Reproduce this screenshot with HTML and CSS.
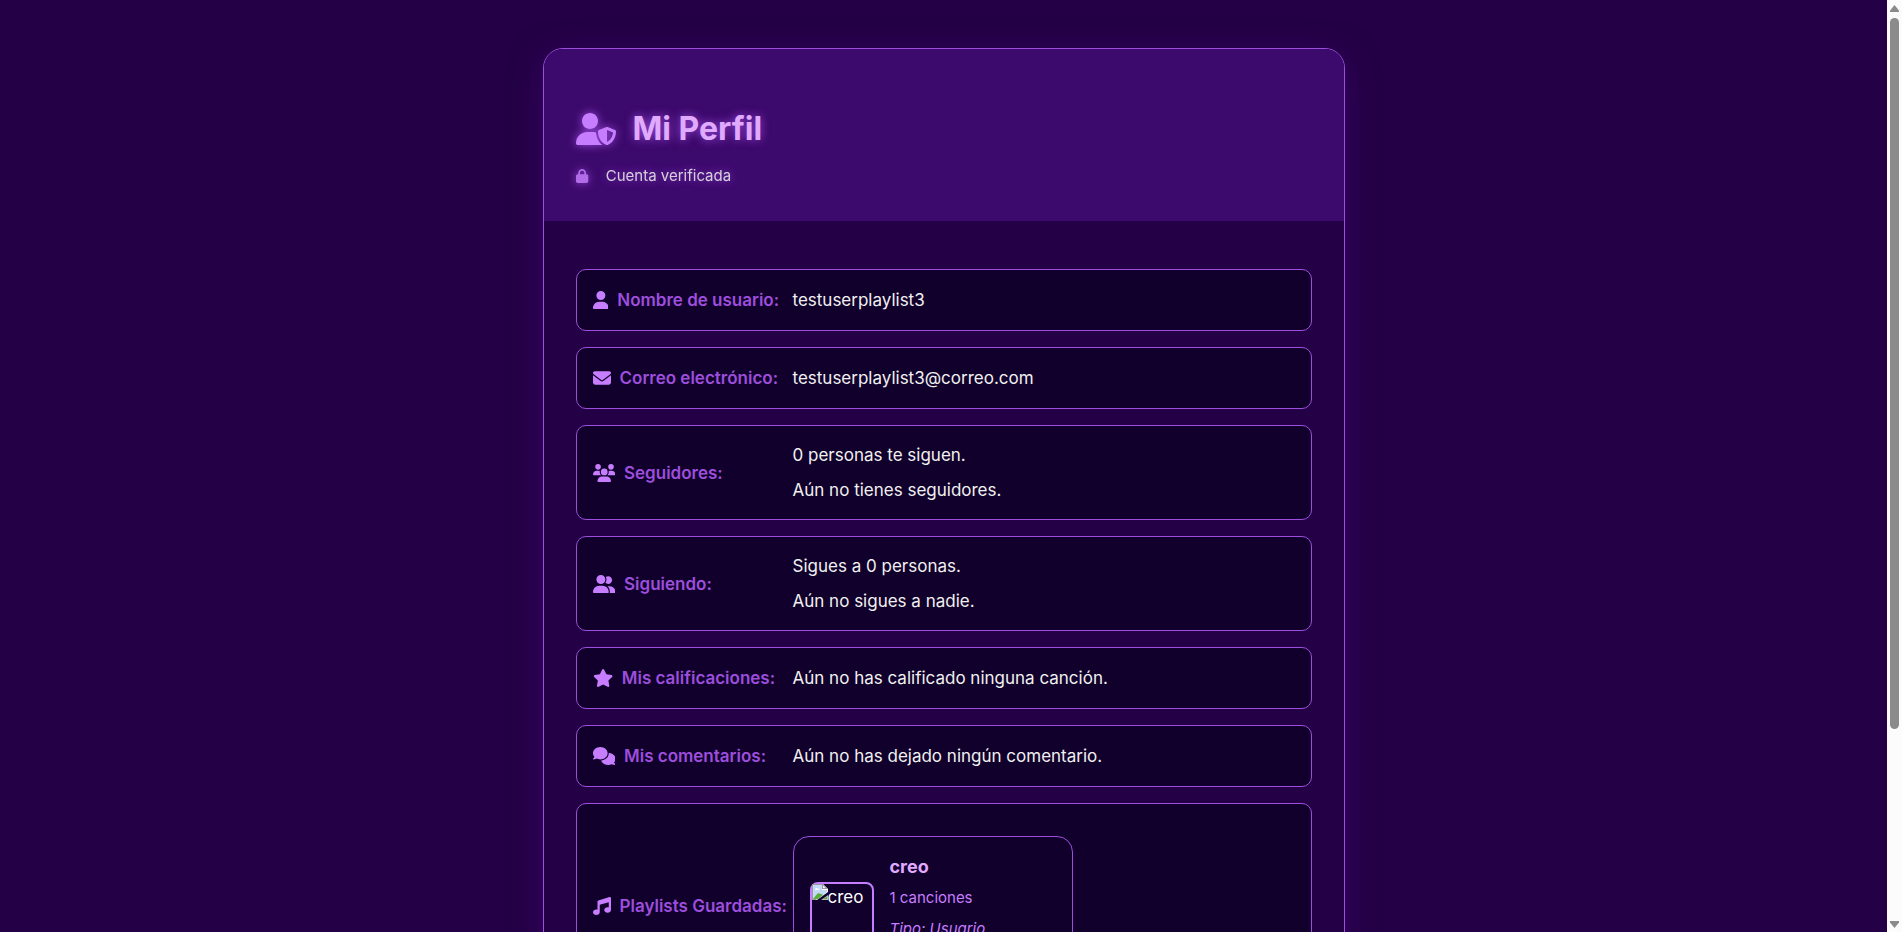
FILE: index.html
```html
<!DOCTYPE html>
<html lang="es">
<head>
<meta charset="utf-8">
<title>Mi Perfil</title>
<link rel="stylesheet" href="styles.css">
</head>
<body>
<div class="viewport">
<main class="page">
  <article class="profile">
    <header class="profile-header">
      <h1 class="title">
        <svg class="title-icon" viewBox="0 0 640 512" aria-hidden="true"><path d="M224 256c70.7 0 128-57.3 128-128S294.7 0 224 0S96 57.3 96 128s57.3 128 128 128zm-45.7 48C79.8 304 0 383.8 0 482.3C0 498.7 13.3 512 29.7 512H418.3c1.8 0 3.5-.2 5.3-.5c-76.3-55.1-99.8-141-103.1-200.2c-16.1-4.8-33.1-7.3-50.7-7.3H178.3zm308.8-78.3l-120 48C358 277.4 352 286.2 352 296c0 63.3 25.9 168.8 134.8 214.2c5.9 2.5 12.6 2.5 18.5 0C614.1 464.8 640 359.3 640 296c0-9.8-6-18.6-15.1-22.3l-120-48c-5.7-2.3-12.1-2.3-17.8 0zM591.4 312c-3.9 50.7-27.2 116.7-95.4 149.7V273.8L591.4 312z"/></svg>
        Mi Perfil
      </h1>
      <p class="verified">
        <svg class="verified-icon" viewBox="0 0 448 512" aria-hidden="true"><path d="M144 144v48H304V144c0-44.2-35.8-80-80-80s-80 35.8-80 80zM80 192V144C80 64.5 144.5 0 224 0s144 64.5 144 144v48h16c35.3 0 64 28.7 64 64V448c0 35.3-28.7 64-64 64H64c-35.3 0-64-28.7-64-64V256c0-35.3 28.7-64 64-64H80z"/></svg>
        Cuenta verificada
      </p>
    </header>
    <dl class="details">
      <div class="row">
        <dt class="label"><svg class="icon" viewBox="0 0 448 512" aria-hidden="true"><path d="M224 256A128 128 0 1 0 224 0a128 128 0 1 0 0 256zm-45.7 48C79.8 304 0 383.8 0 482.3C0 498.7 13.3 512 29.7 512H418.3c16.4 0 29.7-13.3 29.7-29.7C448 383.8 368.2 304 269.7 304H178.3z"/></svg>Nombre de usuario:</dt>
        <dd class="value">testuserplaylist3</dd>
      </div>
      <div class="row">
        <dt class="label"><svg class="icon" viewBox="0 0 512 512" aria-hidden="true"><path d="M48 64C21.5 64 0 85.5 0 112c0 15.1 7.1 29.3 19.2 38.4L236.8 313.6c11.4 8.5 27 8.5 38.4 0L492.8 150.4c12.1-9.1 19.2-23.3 19.2-38.4c0-26.5-21.5-48-48-48H48zM0 176V384c0 35.3 28.7 64 64 64H448c35.3 0 64-28.7 64-64V176L294.4 339.2c-22.8 17.1-54 17.1-76.8 0L0 176z"/></svg>Correo electrónico:</dt>
        <dd class="value">testuserplaylist3@correo.com</dd>
      </div>
      <div class="row">
        <dt class="label"><svg class="icon" viewBox="0 0 640 512" aria-hidden="true"><path d="M144 0a80 80 0 1 1 0 160A80 80 0 1 1 144 0zM512 0a80 80 0 1 1 0 160A80 80 0 1 1 512 0zM0 298.7C0 239.8 47.8 192 106.7 192h42.7c15.9 0 31 3.5 44.6 9.7c-1.3 7.2-1.9 14.7-1.9 22.3c0 38.2 16.8 72.5 43.3 96c-.2 0-.4 0-.7 0H21.3C9.6 320 0 310.4 0 298.7zM405.3 320c-.2 0-.4 0-.7 0c26.6-23.5 43.3-57.8 43.3-96c0-7.6-.7-15-1.9-22.3c13.6-6.3 28.7-9.7 44.6-9.7h42.7C592.2 192 640 239.8 640 298.7c0 11.8-9.6 21.3-21.3 21.3H405.3zM224 224a96 96 0 1 1 192 0 96 96 0 1 1 -192 0zM128 485.3C128 411.7 187.7 352 261.3 352H378.7C452.3 352 512 411.7 512 485.3c0 14.7-11.9 26.7-26.7 26.7H154.7c-14.7 0-26.7-11.9-26.7-26.7z"/></svg>Seguidores:</dt>
        <dd class="value"><p>0 personas te siguen.</p><p>Aún no tienes seguidores.</p></dd>
      </div>
      <div class="row">
        <dt class="label"><svg class="icon" viewBox="0 0 640 512" aria-hidden="true"><path d="M96 128a128 128 0 1 1 256 0A128 128 0 1 1 96 128zM0 482.3C0 383.8 79.8 304 178.3 304h91.4C368.2 304 448 383.8 448 482.3c0 16.4-13.3 29.7-29.7 29.7H29.7C13.3 512 0 498.7 0 482.3zM609.3 512H471.4c5.4-9.4 8.6-20.3 8.6-32v-8c0-60.7-27.1-115.2-69.8-151.8c2.4-.1 4.7-.2 7.1-.2h61.4C567.8 320 640 392.2 640 481.3c0 17-13.8 30.7-30.7 30.7zM432 256c-31 0-59-12.6-79.3-32.9C372.4 196.5 384 163.6 384 128c0-26.8-6.6-52.1-18.3-74.3C384.3 40.1 407.2 32 432 32c61.9 0 112 50.1 112 112s-50.1 112-112 112z"/></svg>Siguiendo:</dt>
        <dd class="value"><p>Sigues a 0 personas.</p><p>Aún no sigues a nadie.</p></dd>
      </div>
      <div class="row">
        <dt class="label"><svg class="icon" viewBox="0 0 576 512" aria-hidden="true"><path d="M316.9 18C311.6 7 300.4 0 288.1 0s-23.4 7-28.8 18L195 150.3 51.4 171.5c-12 1.8-22 10.2-25.7 21.7s-.7 24.2 7.9 32.7L137.8 329 113.2 474.7c-2 12 3 24.2 12.9 31.3s23 8 33.8 2.3l128.3-68.5 128.3 68.5c10.8 5.7 23.9 4.9 33.8-2.3s14.9-19.3 12.9-31.3L438.5 329 542.7 225.9c8.6-8.5 11.7-21.2 7.9-32.7s-13.7-19.9-25.7-21.7L381.2 150.3 316.9 18z"/></svg>Mis calificaciones:</dt>
        <dd class="value">Aún no has calificado ninguna canción.</dd>
      </div>
      <div class="row">
        <dt class="label"><svg class="icon" viewBox="0 0 640 512" aria-hidden="true"><path d="M208 352c114.9 0 208-78.8 208-176S322.9 0 208 0S0 78.8 0 176c0 38.6 14.7 74.3 39.6 103.4c-3.5 9.4-8.7 17.7-14.2 24.7c-4.8 6.2-9.7 11-13.3 14.3c-1.8 1.6-3.3 2.9-4.3 3.7c-.5 .4-.9 .7-1.1 .8l-.2 .2 0 0 0 0C1 327.2-1.4 334.4 .8 340.9S9.1 352 16 352c21.8 0 43.8-5.6 62.1-12.5c9.2-3.5 17.8-7.4 25.3-11.4C134.1 343.3 169.8 352 208 352zM448 176c0 112.3-99.1 196.9-216.5 207C255.8 457.4 336.4 512 432 512c38.2 0 73.9-8.7 104.7-23.9c7.5 4 16 7.9 25.2 11.4c18.3 6.9 40.3 12.5 62.1 12.5c6.9 0 13.1-4.5 15.2-11.1c2.1-6.6-.2-13.8-5.8-17.9l0 0 0 0-.2-.2c-.2-.2-.6-.4-1.1-.8c-1-.8-2.5-2-4.3-3.7c-3.6-3.3-8.5-8.1-13.3-14.3c-5.5-7-10.7-15.4-14.2-24.7c24.9-29 39.6-64.7 39.6-103.4c0-92.8-84.9-168.9-192.6-175.5c.4 5.1 .6 10.3 .6 15.5z"/></svg>Mis comentarios:</dt>
        <dd class="value">Aún no has dejado ningún comentario.</dd>
      </div>
      <div class="row">
        <dt class="label"><svg class="icon" viewBox="0 0 512 512" aria-hidden="true"><path d="M499.1 6.3c8.1 6 12.9 15.6 12.9 25.7v72V368c0 44.2-43 80-96 80s-96-35.8-96-80s43-80 96-80c11.2 0 22 1.6 32 4.6V147L192 223.8V432c0 44.2-43 80-96 80s-96-35.8-96-80s43-80 96-80c11.2 0 22 1.6 32 4.6V200 128c0-14.1 9.3-26.6 22.8-30.7l320-96c9.7-2.9 20.2-1.1 28.3 5z"/></svg>Playlists Guardadas:</dt>
        <dd class="value">
          <section class="playlist">
            <div class="cover">
              <svg class="broken" viewBox="0 0 16 16" aria-hidden="true"><path fill="#fff" d="M0 0h11l5 5v3L5 16H0z"/><path fill="#c3d9f7" d="M1 1h9v5h5v2L6 15H1z"/><path fill="#fff" d="M3 5.500a1.500 1.500 0 0 1 2.500-1A1.500 1.500 0 0 1 7.500 6H3z"/><path fill="#5cae3c" d="M1 15l5-6 3 1 2 1-5 4z"/><path fill="#9a9a9a" d="M0 0h11l5 5h-6V1H1v14h4l-1 1H0z"/><path fill="#fff" d="M11 1.500V4h2.500z"/><path fill="#b8b8b8" d="M16 11v5H9z"/><path fill="#5cae3c" d="M15 12.500V15h-4z"/></svg>creo
            </div>
            <div class="playlist-info">
              <h2 class="playlist-name">creo</h2>
              <p class="playlist-meta">1 canciones</p>
              <p class="playlist-meta playlist-type">Tipo: Usuario</p>
            </div>
          </section>
        </dd>
      </div>
    </dl>
  </article>
</main>
<div class="scrollbar" aria-hidden="true">
  <svg class="arrow" viewBox="0 0 9 7"><path d="M4.500 0L9 5.500V7H0V5.500z"/></svg>
  <div class="track"><div class="thumb"></div></div>
  <svg class="arrow" viewBox="0 0 9 7"><path d="M4.500 7L9 1.500V0H0V1.500z"/></svg>
</div>
</div>
</body>
</html>
```
FILE: styles.css
```css
* {
  box-sizing: border-box;
}

body,
h1,
h2,
p,
dl,
dd {
  margin: 0;
}

body {
  background: #240046;
  color: #f0f0f0;
  font-family: Inter, "Open Sans", sans-serif;
  font-size: 17px;
  line-height: 26px;
}

.viewport {
  display: flex;
  height: 100vh;
}

.page {
  flex: 1;
  overflow: hidden;
  padding: 48px 16px;
}

.profile {
  max-width: 802px;
  margin: 0 auto;
  border: 1px solid #9d4edd;
  border-radius: 20px;
  overflow: hidden;
  box-shadow: 0 8px 32px rgba(60, 9, 108, 0.7);
}

.profile-header {
  display: flex;
  flex-direction: column;
  gap: 4px;
  padding: 50px 32px 32px;
  background: #3c096c;
  text-shadow: 0 0 10px #9d4edd;
}

.title {
  display: flex;
  align-items: center;
  gap: 17px;
  color: #e0aaff;
  font-size: 32px;
  font-weight: 700;
  line-height: 60px;
}

.title-icon,
.verified-icon {
  fill: #c77dff;
  filter: drop-shadow(0 0 5px #9d4edd);
  overflow: visible;
}

.title-icon {
  height: 32px;
}

.verified {
  display: flex;
  align-items: center;
  gap: 18px;
  font-size: 15px;
  opacity: 0.85;
}

.verified-icon {
  height: 14px;
}

.details {
  display: flex;
  flex-direction: column;
  gap: 16px;
  padding: 48px 32px;
}

.row {
  display: grid;
  grid-template-columns: 200px 1fr;
  align-items: center;
  padding: 16px;
  border: 1px solid #9d4edd;
  border-radius: 10px;
  background: #10002b;
}

.label {
  display: flex;
  align-items: center;
  gap: 9px;
  color: #9d4edd;
  font-weight: 600;
  line-height: 28px;
  white-space: nowrap;
}

.icon {
  height: 18px;
  fill: #c77dff;
}

.value {
  display: flex;
  flex-direction: column;
  gap: 9px;
}

.playlist {
  display: flex;
  align-items: center;
  gap: 16px;
  width: 280px;
  margin-top: 16px;
  padding: 17px 16px;
  border: 1px solid #9d4edd;
  border-radius: 16px;
}

.cover {
  display: flex;
  width: 64px;
  height: 64px;
  border: 2px solid #c77dff;
  border-radius: 8px;
  color: #fff;
}

.broken {
  width: 16px;
  height: 16px;
}

.playlist-info {
  display: flex;
  flex-direction: column;
  gap: 5px;
  min-height: 120px;
}

.playlist-name {
  color: #e0aaff;
  font-size: 18px;
  line-height: 26px;
}

.playlist-meta {
  color: #c77dff;
  font-size: 15px;
}

.playlist-type {
  font-style: italic;
}

.scrollbar {
  display: flex;
  flex-direction: column;
  align-items: center;
  gap: 6px;
  width: 15px;
  padding: 5px 3px 4px;
  background: #fcfcfc;
}

.arrow {
  width: 9px;
  height: 7px;
  fill: #8b8b8b;
}

.track {
  flex: 1;
  width: 9px;
}

.thumb {
  height: 79.3%;
  border-radius: 5px;
  background: #8b8b8b;
}
```
